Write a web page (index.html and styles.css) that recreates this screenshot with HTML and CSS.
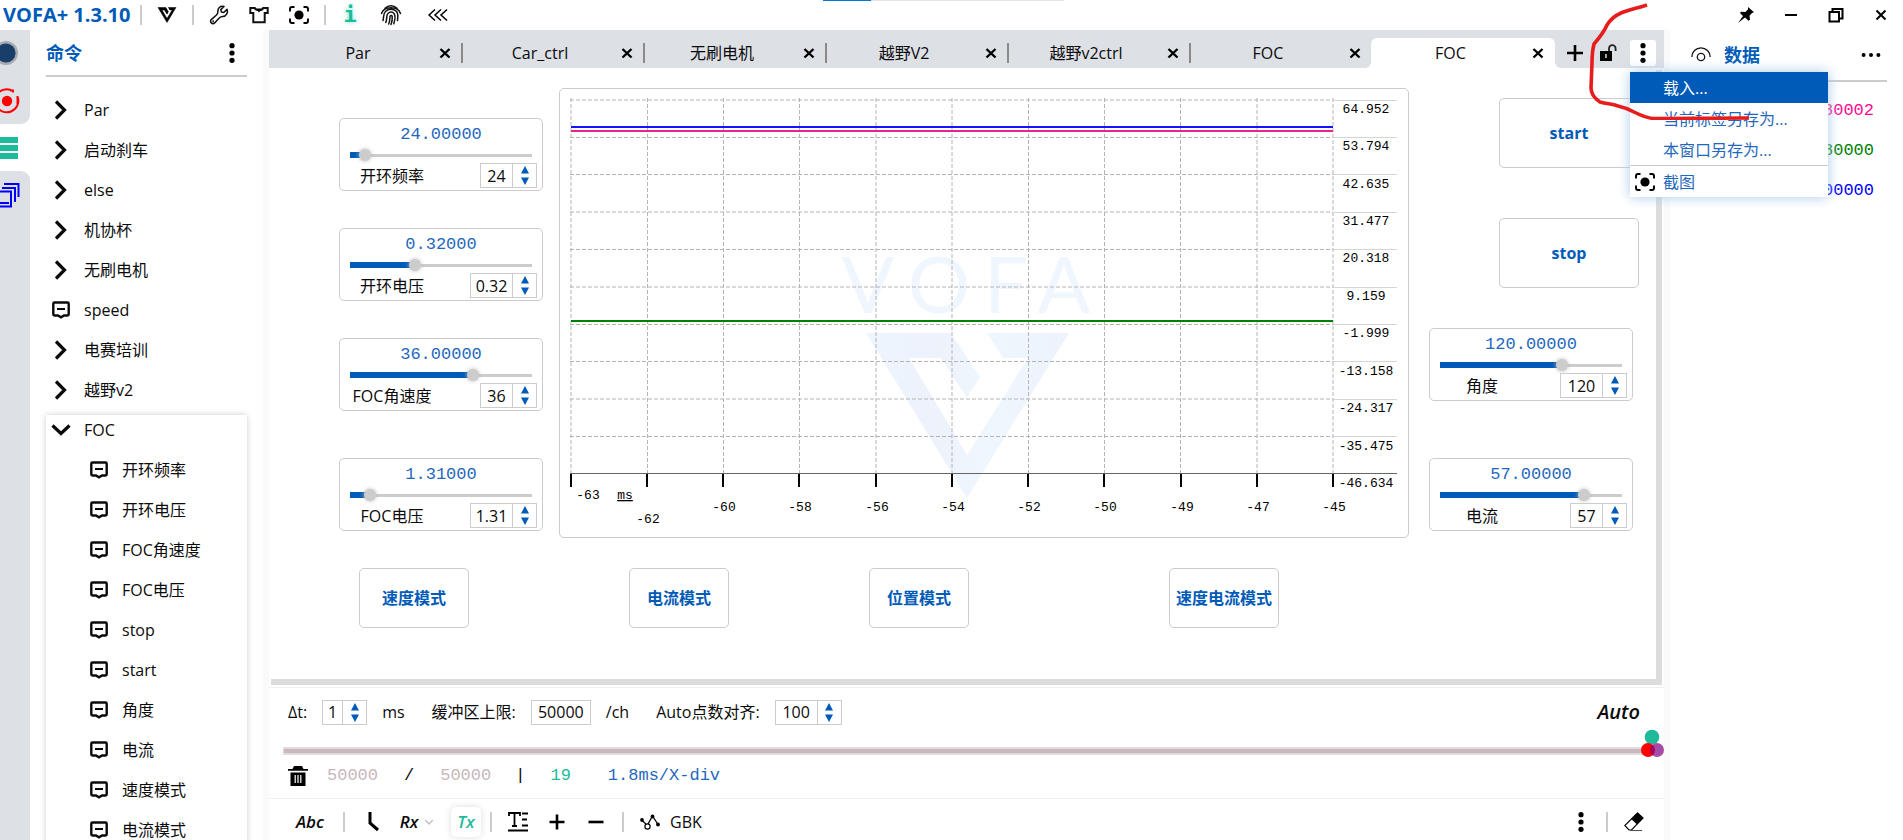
FILE: index.html
```html
<!DOCTYPE html>
<html lang="zh-CN">
<head>
<meta charset="utf-8">
<title>VOFA+ 1.3.10</title>
<link rel="stylesheet" href="styles.css">
</head>
<body>
<svg class="defs" aria-hidden="true">
  <symbol id="chev" viewBox="0 0 20 20"><path d="M5 1.500l8.500 8.500L5 18.500" fill="none" stroke="#0a0a0a" stroke-width="3.200"/></symbol>
  <symbol id="chev-down" viewBox="0 0 20 20"><path d="M1.500 5.500L10 13.500l8.500-8" fill="none" stroke="#0a0a0a" stroke-width="3.200"/></symbol>
  <symbol id="cmd" viewBox="0 0 20 20"><path d="M3.500 2.500h13q1.200 0 1.200 1.200v10.600q0 1.200-1.200 1.200h-3.500L10 17.300l-3-1.800H3.500q-1.200 0-1.200-1.200V3.700q0-1.200 1.200-1.200z" fill="none" stroke="#0a0a0a" stroke-width="2.400"/><path d="M6 9h8" stroke="#0a0a0a" stroke-width="2"/></symbol>
  <symbol id="dots" viewBox="0 0 20 20"><circle cx="10" cy="2.700" r="2.600"/><circle cx="10" cy="10" r="2.600"/><circle cx="10" cy="17.300" r="2.600"/></symbol>
  <symbol id="cross" viewBox="0 0 12 12"><path d="M1.500 2l9 8.500M10.500 2l-9 8.500" stroke="#000" stroke-width="2.400"/></symbol>
  <symbol id="focus" viewBox="0 0 20 20"><circle cx="10" cy="10" r="4.600"/><path d="M1 6.500V4q0-2 2-2h2.500M14.500 2H17q2 0 2 2v2.500M19 13.500V16q0 2-2 2h-2.500M5.500 18H3q-2 0-2-2v-2.500" fill="none" stroke="#000" stroke-width="1.900"/></symbol>
  <symbol id="up" viewBox="0 0 8 8"><path d="M4 0l4 7.500H0z" fill="#005bb8"/></symbol>
  <symbol id="down" viewBox="0 0 8 8"><path d="M4 8L0 .5h8z" fill="#005bb8"/></symbol>
</svg>

<div class="app">
  <header class="titlebar">
    <h1>VOFA+ 1.3.10</h1>
    <i class="sep"></i>
    <button aria-label="VOFA"><svg viewBox="0 0 20 20"><path d="M1 2.500h7.800l2.600 4.200L10 9.200 7.400 5H5l5 8.500L15.200 5h-2.400l-1.400-2.500H19L10 17.500z" stroke="#000" stroke-width=".5"/></svg></button>
    <i class="sep"></i>
    <div class="tools">
      <button aria-label="工具"><svg viewBox="0 0 22 22"><path d="M19.800 4.800l-3.600 3.400-2.600-.6-.6-2.500 3.500-3.400c-3.300-1.300-7 1-6.700 5.300.1 2-.4 2.800-1.600 4L2.500 16a2.600 2.600 0 0 0 3.700 3.700l5-5.400c1.200-1.200 2-1.600 3.900-1.600 3.800 0 6.100-4.300 4.700-7.900z" fill="none" stroke="#111" stroke-width="1.700" stroke-linejoin="round"/><circle cx="4.600" cy="17.700" r="1"/></svg></button>
      <button aria-label="主题"><svg viewBox="0 0 20 20"><path d="M1.300 3h4.500c.7 3 7.700 3 8.400 0h4.500v5h-3v9.300H4.300V8h-3z" fill="none" stroke="#111" stroke-width="2"/><path d="M7.200 3.500h5.600L10 7.500z"/></svg></button>
      <button aria-label="截图"><svg viewBox="0 0 20 20"><use href="#focus"/></svg></button>
    </div>
    <i class="sep"></i>
    <button class="info" aria-label="信息">i</button>
    <button class="finger" aria-label="指纹"><svg viewBox="0 0 22 22"><g fill="none" stroke="#111" stroke-width="1.500" stroke-linecap="round"><path d="M5 4.200C8.500 1 13.500 1 17 4.200M1.500 9.500C4 1.800 18 1.800 20.500 9.500M3 16.500C4 13 3 9.500 5.500 7.500 8.500 4.500 13.500 4.500 16.500 7.500c2 2.500 1.500 5.500 1 9M5.800 18.500C7.500 14.500 6 11 8 9.500c2-2 4.500-1.800 6 0 1.500 2 1 6.500-.2 10.200M8.700 20C10.500 16 9.500 13 10.200 12c.8-1 1.800-.5 2 .5.300 3-.2 5.500-1.200 8"/></g></svg></button>
    <button aria-label="收起"><svg viewBox="0 0 20 20"><path d="M7 4.500L1 10l6 5.500M13 4.500L7 10l6 5.500M19 4.500L13 10l6 5.500" fill="none" stroke="#000" stroke-width="1.500"/></svg></button>
    <div class="progress"><i></i></div>
    <div class="winctl">
      <button aria-label="置顶"><svg viewBox="0 0 20 20"><path d="M12 2l6 5.300-2 .6-2.500 2.800.5 4-1.500 1L9 12.400 2 18l5-7L4 8l1-1.200 4.500.2L12 4.300z"/></svg></button>
      <button aria-label="最小化"><svg viewBox="0 0 20 20"><path d="M4 10h12" stroke="#000" stroke-width="2"/></svg></button>
      <button aria-label="还原"><svg viewBox="0 0 20 20"><path d="M3.500 7h9.500v9.500H3.500zM6.500 7V4h10v9.500H13" fill="none" stroke="#000" stroke-width="2"/></svg></button>
      <button aria-label="关闭"><svg viewBox="0 0 20 20"><path d="M5.500 5.500l9 9M14.500 5.500l-9 9" stroke="#000" stroke-width="2"/></svg></button>
    </div>
  </header>

  <div class="body">
    <nav class="rail">
      <div class="rail-top">
        <button aria-label="连接"><svg viewBox="0 0 30 30"><circle cx="6" cy="15" r="12" fill="#a9abb0"/><circle cx="6" cy="15" r="9.600" fill="#173f69"/></svg></button>
        <button aria-label="录制"><svg viewBox="0 0 30 30"><circle cx="7" cy="15" r="5.200" fill="#f00"/><path d="M-4 11A11.500 11.500 0 0 1 13 5M17.500 10.500A11.500 11.500 0 0 1-4 19M10 4.500h3v2M17.500 18v-8" fill="none" stroke="#f00" stroke-width="2"/></svg></button>
      </div>
      <div class="rail-mid"><button aria-label="命令"><svg viewBox="0 0 30 30"><path d="M0 5h18v6H0zM0 13h18v6H0zM0 21h18v6H0z" fill="#1dba9b"/></svg></button></div>
      <div class="rail-low"><button aria-label="窗口"><svg viewBox="0 0 30 30"><path d="M-2 11.500h13v15H-2M0 23h9M2 8h13v14M4 4h14.500v13" fill="none" stroke="#00f" stroke-width="2"/></svg></button></div>
    </nav>

    <aside class="commands">
      <div class="panel-head"><h2>命令</h2><button aria-label="更多"><svg viewBox="0 0 20 20"><use href="#dots"/></svg></button></div>
      <ul class="list">
        <li><svg><use href="#chev"/></svg>Par</li>
        <li><svg><use href="#chev"/></svg>启动刹车</li>
        <li><svg><use href="#chev"/></svg>else</li>
        <li><svg><use href="#chev"/></svg>机协杯</li>
        <li><svg><use href="#chev"/></svg>无刷电机</li>
        <li><svg><use href="#cmd"/></svg>speed</li>
        <li><svg><use href="#chev"/></svg>电赛培训</li>
        <li><svg><use href="#chev"/></svg>越野v2</li>
      </ul>
      <div class="group">
        <ul class="list">
          <li><svg><use href="#chev-down"/></svg>FOC</li>
        </ul>
        <ul class="list sub">
          <li><svg><use href="#cmd"/></svg>开环频率</li>
          <li><svg><use href="#cmd"/></svg>开环电压</li>
          <li><svg><use href="#cmd"/></svg>FOC角速度</li>
          <li><svg><use href="#cmd"/></svg>FOC电压</li>
          <li><svg><use href="#cmd"/></svg>stop</li>
          <li><svg><use href="#cmd"/></svg>start</li>
          <li><svg><use href="#cmd"/></svg>角度</li>
          <li><svg><use href="#cmd"/></svg>电流</li>
          <li><svg><use href="#cmd"/></svg>速度模式</li>
          <li><svg><use href="#cmd"/></svg>电流模式</li>
        </ul>
      </div>
    </aside>
    <div class="splitter"></div>

    <main class="center">
      <div class="tabs">
        <div class="tab"><span>Par</span><button aria-label="关闭 Par"><svg><use href="#cross"/></svg></button></div>
        <div class="tab"><span>Car_ctrl</span><button aria-label="关闭 Car_ctrl"><svg><use href="#cross"/></svg></button></div>
        <div class="tab"><span>无刷电机</span><button aria-label="关闭 无刷电机"><svg><use href="#cross"/></svg></button></div>
        <div class="tab"><span>越野V2</span><button aria-label="关闭 越野V2"><svg><use href="#cross"/></svg></button></div>
        <div class="tab"><span>越野v2ctrl</span><button aria-label="关闭 越野v2ctrl"><svg><use href="#cross"/></svg></button></div>
        <div class="tab last"><span>FOC</span><button aria-label="关闭 FOC"><svg><use href="#cross"/></svg></button></div>
        <div class="tab active"><span>FOC</span><button aria-label="关闭当前 FOC"><svg><use href="#cross"/></svg></button></div>
        <button class="add" aria-label="新建"><svg viewBox="0 0 20 20"><path d="M10 2v16M2 10h16" stroke="#000" stroke-width="2.600"/></svg></button>
        <button class="lock" aria-label="锁定"><svg viewBox="0 0 20 20"><path d="M2 8h12v10H2z"/><path d="M11 8V5.500a3.300 3.300 0 0 1 6.600 0V8" fill="none" stroke="#222" stroke-width="1.800"/><path d="M8 11v4" stroke="#dde0e5" stroke-width="1.500"/></svg></button>
        <div class="menu-anchor">
          <button class="more" aria-label="菜单"><svg viewBox="0 0 20 20"><use href="#dots"/></svg></button>
          <div class="menu" role="menu">
            <button role="menuitem" class="hot">载入...</button>
            <button role="menuitem">当前标签另存为...</button>
            <button role="menuitem">本窗口另存为...</button>
            <hr>
            <button role="menuitem"><svg viewBox="0 0 20 20"><use href="#focus"/></svg>截图</button>
          </div>
        </div>
      </div>

      <div class="workspace">
        <div class="board">
          <section class="card c1"><output>24.00000</output><input type="range" aria-label="开环频率 滑块" min="0" max="100" value="5" style="--p:15px">
            <div class="row"><label for="s1">开环频率</label><div class="spin"><input id="s1" class="n2" value="24"><div class="arrows"><button aria-label="加"><svg><use href="#up"/></svg></button><button aria-label="减"><svg><use href="#down"/></svg></button></div></div></div></section>
          <section class="card c2"><output>0.32000</output><input type="range" aria-label="开环电压 滑块" min="0" max="100" value="35" style="--p:64px">
            <div class="row"><label for="s2">开环电压</label><div class="spin"><input id="s2" class="n3" value="0.32"><div class="arrows"><button aria-label="加"><svg><use href="#up"/></svg></button><button aria-label="减"><svg><use href="#down"/></svg></button></div></div></div></section>
          <section class="card c3"><output>36.00000</output><input type="range" aria-label="FOC角速度 滑块" min="0" max="100" value="69" style="--p:122px">
            <div class="row"><label for="s3">FOC角速度</label><div class="spin"><input id="s3" class="n2" value="36"><div class="arrows"><button aria-label="加"><svg><use href="#up"/></svg></button><button aria-label="减"><svg><use href="#down"/></svg></button></div></div></div></section>
          <section class="card c4"><output>1.31000</output><input type="range" aria-label="FOC电压 滑块" min="0" max="100" value="8" style="--p:20px">
            <div class="row"><label for="s4">FOC电压</label><div class="spin"><input id="s4" class="n3" value="1.31"><div class="arrows"><button aria-label="加"><svg><use href="#up"/></svg></button><button aria-label="减"><svg><use href="#down"/></svg></button></div></div></div></section>

          <section class="plot">
            <svg viewBox="0 0 850 450" role="img" aria-label="波形">
              <defs><linearGradient id="wm" x1="0" x2="1" y1="0" y2="0"><stop offset="0" stop-color="#edf5fe"/><stop offset=".35" stop-color="#edf2fb"/><stop offset=".6" stop-color="#eff7fe"/><stop offset="1" stop-color="#edf2fb"/></linearGradient></defs>
              <g class="brand"><text x="309">V</text><text x="380">O</text><text x="447">F</text><text x="505">A</text></g>
              <path fill="url(#wm)" d="M307 245h85l29 44-13 21-26-40h-32l58 97 61-97h-25l-16-25h82L408 410z"/>
              <g class="grid">
                <path d="M11 12H774M11 49.500H774M11 86.500H774M11 124H774M11 161.500H774M11 199H774M11 236.500H774M11 273.500H774M11 311H774M11 348.500H774"/>
                <path d="M12 10V385M88.500 10V385M164.500 10V385M240.500 10V385M317 10V385M393 10V385M469.500 10V385M545.500 10V385M621.500 10V385M698 10V385M774 10V385"/>
              </g>
              <path stroke="#d6d6d6" d="M774 12.500h64M774 49.500h64M774 86.500h64M774 124.500h64M774 161.500h64M774 199.500h64M774 236.500h64M774 273.500h64M774 311.500h64M774 348.500h64"/>
              <path stroke="#666" d="M11 385.500h827"/>
              <path stroke="#000" stroke-width="2" d="M12 386v13M88 386v13M164 386v13M240 386v13M317 386v13M393 386v13M469 386v13M545 386v13M622 386v13M698 386v13M774 386v13"/>
              <path stroke="#1414ff" stroke-width="2" d="M12 39h762"/>
              <path stroke="#e6248f" stroke-width="2" d="M12 43h762"/>
              <path stroke="#008000" stroke-width="2" d="M12 233h762"/>
              <g class="ticks">
                <text x="807" y="25">64.952</text><text x="807" y="62">53.794</text><text x="807" y="100">42.635</text><text x="807" y="137">31.477</text><text x="807" y="174">20.318</text><text x="807" y="212">9.159</text><text x="807" y="249">-1.999</text><text x="807" y="287">-13.158</text><text x="807" y="324">-24.317</text><text x="807" y="362">-35.475</text><text x="807" y="399">-46.634</text>
                <text x="29" y="411">-63</text><text x="66" y="411" text-decoration="underline">ms</text><text x="89" y="435">-62</text><text x="165" y="423">-60</text><text x="241" y="423">-58</text><text x="318" y="423">-56</text><text x="394" y="423">-54</text><text x="470" y="423">-52</text><text x="546" y="423">-50</text><text x="623" y="423">-49</text><text x="699" y="423">-47</text><text x="775" y="423">-45</text>
              </g>
            </svg>
          </section>

          <button class="act a-start">start</button>
          <button class="act a-stop">stop</button>

          <section class="card c5"><output>120.00000</output><input type="range" aria-label="角度 滑块" min="0" max="100" value="68" style="--p:120px">
            <div class="row"><label for="s5">角度</label><div class="spin"><input id="s5" class="n3" value="120"><div class="arrows"><button aria-label="加"><svg><use href="#up"/></svg></button><button aria-label="减"><svg><use href="#down"/></svg></button></div></div></div></section>
          <section class="card c6"><output>57.00000</output><input type="range" aria-label="电流 滑块" min="0" max="100" value="81" style="--p:143px">
            <div class="row"><label for="s6">电流</label><div class="spin"><input id="s6" class="n2" value="57"><div class="arrows"><button aria-label="加"><svg><use href="#up"/></svg></button><button aria-label="减"><svg><use href="#down"/></svg></button></div></div></div></section>

          <button class="act m1">速度模式</button>
          <button class="act m2">电流模式</button>
          <button class="act m3">位置模式</button>
          <button class="act m4">速度电流模式</button>
        </div>
      </div>

      <div class="buffer">
        <div class="params">
          <label for="dt">Δt:</label>
          <div class="spin"><input id="dt" class="n1" value="1"><div class="arrows"><button aria-label="加"><svg><use href="#up"/></svg></button><button aria-label="减"><svg><use href="#down"/></svg></button></div></div>
          <span class="unit">ms</span>
          <label for="lim">缓冲区上限:</label>
          <div class="spin"><input id="lim" class="n5" value="50000"></div>
          <span class="unit">/ch</span>
          <label for="pts">Auto点数对齐:</label>
          <div class="spin"><input id="pts" class="n3" value="100"><div class="arrows"><button aria-label="加"><svg><use href="#up"/></svg></button><button aria-label="减"><svg><use href="#down"/></svg></button></div></div>
          <button class="auto">Auto</button>
        </div>
        <div class="timeline"><i></i><svg viewBox="0 0 24 30"><circle cx="12" cy="8" r="7.300" fill="#1dba9b"/><circle cx="8" cy="21" r="7" fill="#f00"/><circle cx="17" cy="21" r="7" fill="#800080" fill-opacity=".7"/></svg></div>
        <div class="stats">
          <button aria-label="清空"><svg viewBox="0 0 20 20"><path d="M6 0h8l1.500 3H20v1.800H0V3h4.500zM2.500 6.500h15V20h-15z"/><path d="M7.200 9v8M10 9v8M12.800 9v8" stroke="#fff" stroke-width="1.200"/></svg></button>
          <span class="dim">50000</span><span class="slash">/</span><span class="dim">50000</span><span class="bar">|</span><span class="green">19</span><span class="blue">1.8ms/X-div</span>
        </div>
      </div>

      <div class="toolbar">
        <button class="it abc">Abc</button>
        <i class="sep"></i>
        <button class="wrap" aria-label="换行"><svg viewBox="0 0 20 20"><path d="M7 0v11l8 7" fill="none" stroke="#000" stroke-width="3"/></svg></button>
        <button class="it rx">Rx<svg viewBox="0 0 8 8"><path d="M1 2.500l3 3 3-3" fill="none" stroke="#c4c4c4" stroke-width="1.200"/></svg></button>
        <button class="it tx">Tx</button>
        <i class="sep"></i>
        <button class="txt" aria-label="文本"><svg viewBox="0 0 20 20"><path d="M1 4V1h11v3M6.500 1v13M4 14h5M0 18.500h20" fill="none" stroke="#000" stroke-width="1.800"/><path d="M14 1.500h6M14 7.500h5M14 13.500h6" stroke="#000" stroke-width="2"/></svg></button>
        <button class="zin" aria-label="放大"><svg viewBox="0 0 20 20"><path d="M10 2.500v15M2.500 10h15" stroke="#000" stroke-width="2.600"/></svg></button>
        <button class="zout" aria-label="缩小"><svg viewBox="0 0 20 20"><path d="M2.500 10h15" stroke="#000" stroke-width="2.600"/></svg></button>
        <i class="sep"></i>
        <button class="gbk"><svg viewBox="0 0 20 20"><path d="M1.500 8l4.500 4M8 12l4.500-8L18 12.500" fill="none" stroke="#000" stroke-width="1.300"/><circle cx="2" cy="8" r="1.900"/><circle cx="12.500" cy="4.500" r="1.900"/><circle cx="18" cy="12.500" r="1.900"/><circle cx="7.500" cy="14.500" r="2.600" fill="#fff" stroke="#000" stroke-width="1.200"/></svg>GBK</button>
        <button class="end" aria-label="更多"><svg viewBox="0 0 20 20"><use href="#dots"/></svg></button>
        <i class="sep"></i>
        <button class="erase" aria-label="清除"><svg viewBox="0 0 20 20"><path d="M13.500.5l6 5.500-6.500 6.500-6-5.700z"/><path d="M13.500 1l5.500 5L7.500 18H5L.8 13.500z" fill="none" stroke="#000" stroke-width="1.100"/><path d="M6 18.500h12" stroke="#555" stroke-width="1.100"/></svg></button>
      </div>
    </main>
    <div class="splitter"></div>

    <aside class="data">
      <div class="data-head">
        <svg viewBox="0 0 20 20"><path d="M.8 12a9.200 9.200 0 0 1 18.400 0" fill="none" stroke="#111" stroke-width="1.300"/><circle cx="10" cy="12" r="3.700" fill="none" stroke="#111" stroke-width="1.300"/></svg>
        <h2>数据</h2>
        <button aria-label="更多"><svg viewBox="0 0 20 20"><circle cx="2.600" cy="10" r="2"/><circle cx="10" cy="10" r="2"/><circle cx="17.400" cy="10" r="2"/></svg></button>
      </div>
      <ul class="values"><li class="pink">80002</li><li class="grn">80000</li><li class="blu">00000</li></ul>
    </aside>
  </div>

  <svg class="ink" viewBox="0 0 164 120" aria-hidden="true"><path d="M61 5C48 9 42 10 35 13Q26 17 21 25C18 32 14 37 8 44Q6 52 6 63L5 88Q5 96 14 102C22 104 26 104 32 106Q41 108 48 112Q62 119 70 118.500L163 118" fill="none" stroke="#e71d1d" stroke-width="3.600" stroke-linejoin="round"/></svg>
</div>
</body>
</html>
```
FILE: styles.css
```css
* { box-sizing: border-box; }
body {
  margin: 0;
  background: #fff;
  color: #0a0a0a;
  font: 16px/24px "Open Sans", "Noto Sans CJK SC", sans-serif;
}
button, input { font: inherit; color: inherit; }
button { border: 0; padding: 0; background: none; display: flex; align-items: center; justify-content: center; }
button svg { width: 20px; height: 20px; display: block; flex: none; }
h1, h2, ul { margin: 0; padding: 0; }
ul { list-style: none; }
h2 { font-size: 18px; line-height: 24px; color: #005bb8; }
.defs { position: absolute; width: 0; height: 0; }
.app { position: relative; height: 100vh; display: flex; flex-direction: column; overflow: hidden; }
.sep { width: 2px; height: 20px; background: #ccc; flex: none; }

/* title bar */
.titlebar { position: relative; height: 30px; flex: none; display: flex; align-items: center; padding-left: 3px; }
.titlebar h1 { width: 137px; font-size: 20px; line-height: 28px; color: #005bb8; white-space: nowrap; }
.titlebar > button { width: 50px; }
.tools { display: flex; gap: 20px; padding: 0 15px; }
.titlebar .info { font: bold 22px/24px "DejaVu Sans Mono", monospace; color: #1dba9b; text-shadow: 0 0 5px #7fe0cd; width: 48px; }
.titlebar .finger { width: 34px; }
.finger svg { width: 22px; height: 22px; }
.titlebar > .finger + button { width: 60px; }
.progress { position: absolute; top: 0; left: 823px; width: 241px; height: 1px; background: #e5e5e5; }
.progress i { display: block; width: 48px; height: 1px; background: #0078d7; }
.winctl { margin-left: auto; display: flex; gap: 25px; padding-right: 12px; }

.body { flex: 1; min-height: 0; display: flex; }
.splitter { width: 6px; background: #fafafa; flex: none; }

/* icon rail */
.rail { width: 30px; flex: none; display: flex; flex-direction: column; background: #dde0e5; }
.rail button svg { width: 30px; height: 30px; }
.rail-top { height: 94px; display: flex; flex-direction: column; gap: 18px; padding-top: 8px; background: #dde0e5; border-radius: 0 0 9px 0; box-shadow: 0 10px 0 #fff; }
.rail-mid { position: relative; z-index: 1; height: 47px; padding-top: 8px; background: #fff; }
.rail-low { flex: 1; padding-top: 9px; background: #dde0e5; border-radius: 0 9px 0 0; box-shadow: 0 -10px 0 #fff; }

/* commands */
.commands { width: 233px; flex: none; padding: 0 16px; display: flex; flex-direction: column; overflow: hidden; }
.panel-head { display: flex; justify-content: space-between; align-items: center; height: 47px; padding: 0 5px 0 0; border-bottom: 2px solid #ccc; margin-bottom: 13px; flex: none; }
.list li { height: 40px; display: flex; align-items: center; gap: 13px; padding-left: 5px; }
.list svg { width: 20px; height: 20px; flex: none; }
.list.sub li { padding-left: 43px; }
.group { margin-top: 5px; box-shadow: 0 0 6px #ccc; }
.group .list:first-child li { height: 30px; }
.group .list.sub { padding-top: 5px; }

/* tabs */
.center { flex: 1; min-width: 0; display: flex; flex-direction: column; }
.tabs { height: 38px; flex: none; display: flex; align-items: center; background: #dde0e5; padding: 8px 8px 0 10px; }
.tab { flex: 0 1 184px; margin-right: -2px; height: 20px; display: flex; align-items: center; border-right: 2px solid #8a8a8a; padding-right: 8px; }
.tab span { flex: 1; text-align: center; }
.tab button { width: 16px; }
.tab svg { width: 12px; height: 12px; }
.tab.last { border-color: transparent; }
.tab.active { position: relative; margin-right: 0; height: 30px; border: 0; padding-right: 9px; background: #fff; border-radius: 6px 6px 0 0; }
.tab.active::before, .tab.active::after { content: ""; position: absolute; bottom: 0; width: 6px; height: 6px; }
.tab.active::before { left: -6px; background: radial-gradient(circle at 0 0, transparent 6px, #fff 6px); }
.tab.active::after { right: -6px; background: radial-gradient(circle at 100% 0, transparent 6px, #fff 6px); }
.add { width: 40px; }
.lock { width: 26px; }
.menu-anchor { position: relative; margin-left: auto; }
.more { width: 26px; height: 26px; background: #fff; border-radius: 3px; }
.menu { position: absolute; z-index: 5; top: 32px; left: 0; width: 198px; background: #fff; box-shadow: 0 0 12px #a9c9ea; }
.menu button { position: relative; width: 100%; height: 31px; padding-left: 33px; justify-content: flex-start; color: #1f68bd; }
.menu .hot { background: #005bb8; color: #fff; }
.menu svg { position: absolute; left: 5px; }
.menu hr { margin: 0; border: 0; height: 1px; background: #ccc; }

/* dashboard: items snap to a 10px grid */
.workspace { flex: 1; min-height: 0; margin: 2px; border: solid #dcdcdc; border-width: 0 6px 6px 0; overflow: hidden; }
.board { display: grid; grid-template-columns: repeat(135, 10px); grid-auto-rows: 10px; padding-left: 8px; margin-top: -2px; margin-right: -50px; }
.card, .act { border: 1px solid #ccc; border-radius: 5px; background: #fff; }
.card { width: 204px; height: 73px; padding: 4px 5px 0; display: flex; flex-direction: column; }
.card output { font: 17px/24px "Liberation Mono", monospace; color: #1f68bd; text-align: center; }
.card input[type=range] { appearance: none; -webkit-appearance: none; width: 182px; height: 16px; margin: 0 5px; background: linear-gradient(#005bb8, #005bb8) 0 50% / var(--p) 6px no-repeat, linear-gradient(#ccc, #ccc) 0 50% / 100% 3px no-repeat; border-radius: 3px; }
.card input[type=range]::-webkit-slider-thumb { -webkit-appearance: none; width: 12px; height: 12px; border-radius: 50%; background: #ccc; box-shadow: 0 0 4px #bbb; }
.row { display: flex; justify-content: space-between; align-items: center; }
.row label { width: 94px; text-align: center; }
.spin { display: flex; height: 25px; border: 1px solid #ccc; background: #fff; }
.spin input { border: 0; padding: 0; text-align: center; outline: 0; background: none; }
.n1 { width: 19px; } .n2 { width: 31px; } .n3 { width: 41px; } .n5 { width: 58px; }
.arrows { width: 24px; border-left: 1px solid #ccc; display: flex; flex-direction: column; justify-content: center; align-items: center; gap: 3px; }
.arrows svg { width: 8px; height: 8px; }
.c1 { grid-area: 6 / 7; } .c2 { grid-area: 17 / 7; } .c3 { grid-area: 28 / 7; } .c4 { grid-area: 40 / 7; }
.c5 { grid-area: 27 / 116; } .c6 { grid-area: 40 / 116; }
.act { font-weight: 700; color: #005bb8; width: 140px; height: 70px; }
.a-start { grid-area: 4 / 123; } .a-stop { grid-area: 16 / 123; }
.m1, .m2, .m3, .m4 { width: 110px; height: 60px; }
.m2, .m3 { width: 100px; }
.m1 { grid-area: 51 / 9; } .m2 { grid-area: 51 / 36; } .m3 { grid-area: 51 / 60; } .m4 { grid-area: 51 / 90; }
.plot { grid-area: 3 / 29; width: 850px; height: 450px; border: 1px solid #ccc; border-radius: 5px; }
.plot svg { display: block; width: 850px; height: 450px; margin: -1px; }
.grid { stroke: #b4b4b4; stroke-dasharray: 4 2; }
.ticks { font: 13px "Liberation Mono", monospace; text-anchor: middle; }
.brand { font: 400 78px Lato, sans-serif; fill: #eff6fe; text-anchor: middle; transform: translateY(225px); }

/* buffer controls */
.buffer { flex: none; border-top: 1px solid #f0f0f0; height: 111px; }
.params { display: flex; align-items: center; height: 48px; padding: 0 24px 0 19px; }
.params .spin { margin: 0 15px; }
.unit { margin-right: 27px; }
.auto { margin-left: auto; font: italic 600 20px/24px "Open Sans", sans-serif; }
.timeline { position: relative; height: 28px; padding: 11px 14px 0; }
.timeline i { display: block; height: 8px; background: #c8b6bc; border: solid #e5dade; border-width: 2px 0 2px 1px; }
.timeline svg { position: absolute; right: 0; top: -7px; width: 24px; height: 30px; }
.stats { display: flex; align-items: center; height: 24px; padding-left: 19px; font: 17px/24px "Liberation Mono", monospace; }
.stats .dim { color: #c8b6bc; margin-left: 19px; }
.slash { margin-left: 26px; }
.slash + .dim { margin-left: 26px; }
.bar { margin-left: 24px; }
.green { color: #1dba9b; margin-left: 25px; }
.blue { color: #1f68bd; margin-left: 37px; }

/* bottom toolbar */
.toolbar { flex: none; height: 42px; border-top: 1px solid #f0f0f0; display: flex; align-items: center; padding: 5px 20px 0 25px; }
.it { font: italic 600 17px/24px "Open Sans", sans-serif; }
.abc { width: 32px; margin-right: 17px; }
.wrap { width: 56px; }
.rx { width: 32px; margin-right: 18px; gap: 6px; }
.rx svg { width: 10px; height: 10px; }
.tx { width: 30px; height: 30px; color: #1dba9b; border-radius: 5px; box-shadow: 0 0 7px #ddd; margin-right: 9px; }
.txt { width: 52px; }
.zin { width: 26px; }
.zout { width: 52px; }
.gbk { margin-left: 16px; gap: 10px; }
.end { margin-left: auto; margin-right: 15px; }
.erase { margin-left: 16px; }

/* data panel */
.data { width: 233px; flex: none; padding: 0 16px; }
.data-head { display: flex; align-items: center; height: 52px; border-bottom: 2px solid #ccc; padding-right: 4px; }
.data-head > svg { width: 20px; height: 20px; margin: 0 13px 0 5px; }
.data-head button { margin-left: auto; width: 24px; }
.values { padding: 9px 13px 0 0; text-align: right; font: 17px/40px "Liberation Mono", monospace; }
.pink { color: #ff0a8f; } .grn { color: #008000; } .blu { color: #00f; }

/* pen stroke over the window */
.ink { position: absolute; z-index: 10; right: 153px; top: 0; width: 164px; height: 120px; pointer-events: none; }
```
